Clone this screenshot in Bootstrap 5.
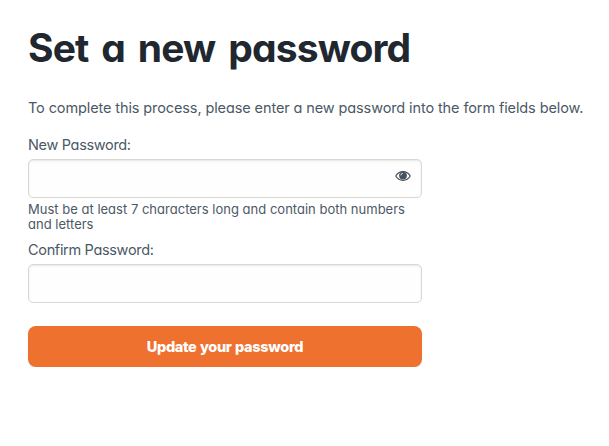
<!DOCTYPE html>
<html lang="en">
<head>
<meta charset="utf-8">
<meta name="viewport" content="width=device-width, initial-scale=1">
<title>Set a new password</title>
<link href="https://cdn.jsdelivr.net/npm/bootstrap@5.3.0/dist/css/bootstrap.min.css" rel="stylesheet">
<style>
body{font-family:Inter,"Liberation Sans",sans-serif;font-feature-settings:"cv11" 1;color:#4b5966;font-size:14.5px;line-height:20px;background:#fff}
.page{padding:24px 0 0 28px}
.page-title{font-size:39px;line-height:48px;font-weight:650;color:#20272f;margin:0 0 26px;letter-spacing:-.85px;word-spacing:4.4px}
.intro{margin:0 0 17px;white-space:nowrap;letter-spacing:-.11px}
.pw-form{width:394px}
.pw-form .form-label{display:block;margin:0 0 4px;letter-spacing:-.33px}
.pw-form .form-control{height:39px;border:1px solid #d9d9d3;border-radius:5px;background:#fefefe;box-shadow:inset 0 1px 2px rgba(70,70,50,.13);padding-right:40px}
.eye-btn{right:11px;top:9px;width:16px;height:16px;line-height:0;color:#46525f}
.hint{font-size:13px;line-height:15px;margin:4px 0 8px;letter-spacing:.01px}
.btn-update{height:41px;margin-top:23px;padding-top:1px;background:#ee7130;color:#fff;font-weight:800;font-size:14.5px;letter-spacing:-.33px;word-spacing:.6px;line-height:20px;border:0;border-radius:8px;box-shadow:0 1px 2px rgba(0,0,0,.1)}
</style>
</head>
<body>
<main class="page">
<h1 class="page-title text-nowrap">Set a new password</h1>
<p class="intro">To complete this process, please enter a new password into the form fields below.</p>
<form class="pw-form">
<label class="form-label" for="p1">New Password:</label>
<div class="position-relative">
<input class="form-control" type="password" id="p1">
<button type="button" class="eye-btn btn p-0 border-0 position-absolute" aria-label="Show password">
<svg width="16" height="16" viewBox="0 0 16 16"><path d="M.8 8C4 2.2 12 2.2 15.2 8 12 13.8 4 13.8.8 8Z" fill="none" stroke="currentColor" stroke-width="1.2"/><circle cx="8" cy="7.6" r="3.9" fill="currentColor"/><path d="M5.8 7.4A2.2 2.2 0 0 1 7.9 5.3" fill="none" stroke="#fff" stroke-width=".8"/></svg>
</button>
</div>
<div class="hint">Must be at least 7 characters long and contain both numbers<br>and letters</div>
<label class="form-label" for="p2">Confirm Password:</label>
<input class="form-control" type="password" id="p2">
<button type="button" class="btn btn-update w-100 px-0 pb-0">Update your password</button>
</form>
</main>
</body>
</html>
